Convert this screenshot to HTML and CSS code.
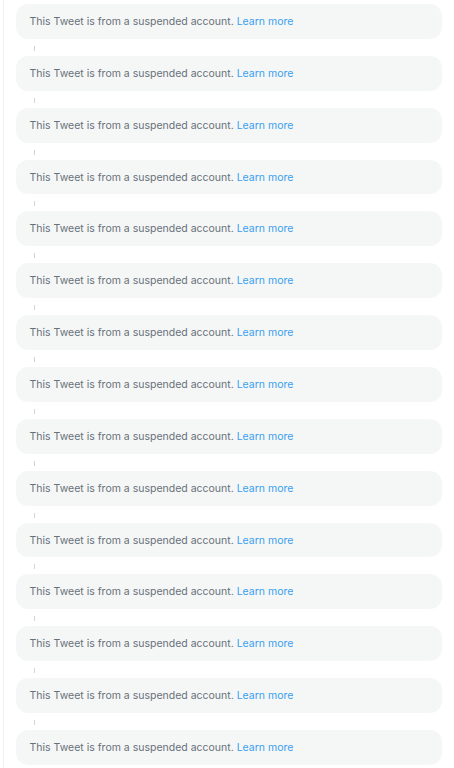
FILE: index.html
```html
<!DOCTYPE html>
<html>
<head>
<meta charset="utf-8">
<link rel="stylesheet" href="styles.css">
</head>
<body>
<div class="thread">
  <div class="notice">This Tweet is from a suspended account. <a class="link" href="#">Learn more</a></div>
  <div class="connector"></div>
  <div class="notice">This Tweet is from a suspended account. <a class="link" href="#">Learn more</a></div>
  <div class="connector"></div>
  <div class="notice">This Tweet is from a suspended account. <a class="link" href="#">Learn more</a></div>
  <div class="connector"></div>
  <div class="notice">This Tweet is from a suspended account. <a class="link" href="#">Learn more</a></div>
  <div class="connector"></div>
  <div class="notice">This Tweet is from a suspended account. <a class="link" href="#">Learn more</a></div>
  <div class="connector"></div>
  <div class="notice">This Tweet is from a suspended account. <a class="link" href="#">Learn more</a></div>
  <div class="connector"></div>
  <div class="notice">This Tweet is from a suspended account. <a class="link" href="#">Learn more</a></div>
  <div class="connector"></div>
  <div class="notice">This Tweet is from a suspended account. <a class="link" href="#">Learn more</a></div>
  <div class="connector"></div>
  <div class="notice">This Tweet is from a suspended account. <a class="link" href="#">Learn more</a></div>
  <div class="connector"></div>
  <div class="notice">This Tweet is from a suspended account. <a class="link" href="#">Learn more</a></div>
  <div class="connector"></div>
  <div class="notice">This Tweet is from a suspended account. <a class="link" href="#">Learn more</a></div>
  <div class="connector"></div>
  <div class="notice">This Tweet is from a suspended account. <a class="link" href="#">Learn more</a></div>
  <div class="connector"></div>
  <div class="notice">This Tweet is from a suspended account. <a class="link" href="#">Learn more</a></div>
  <div class="connector"></div>
  <div class="notice">This Tweet is from a suspended account. <a class="link" href="#">Learn more</a></div>
  <div class="connector"></div>
  <div class="notice">This Tweet is from a suspended account. <a class="link" href="#">Learn more</a></div>
</div>
</body>
</html>
```

FILE: styles.css
```css
html, body {
  margin: 0;
  padding: 0;
  background: #ffffff;
}
body {
  font-family: Inter, "Liberation Sans", sans-serif;
}
.thread {
  margin-left: 3px;
  border-left: 1px solid #eef0f1;
  padding: 4px 12px 8px 12px;
  min-height: 768px;
  box-sizing: border-box;
}
.notice {
  background: #f5f7f7;
  border-radius: 12px;
  height: 34.86px;
  box-sizing: border-box;
  padding: 0 13.5px;
  display: flex;
  align-items: center;
  font-size: 10.5px;
  color: #687078;
  white-space: pre;
}
.link {
  color: #3a9ff0;
  text-decoration: none;
}
.connector {
  width: 1px;
  height: 5px;
  background: #cfd6db;
  margin: 7px 0 5px 18px;
}
```
